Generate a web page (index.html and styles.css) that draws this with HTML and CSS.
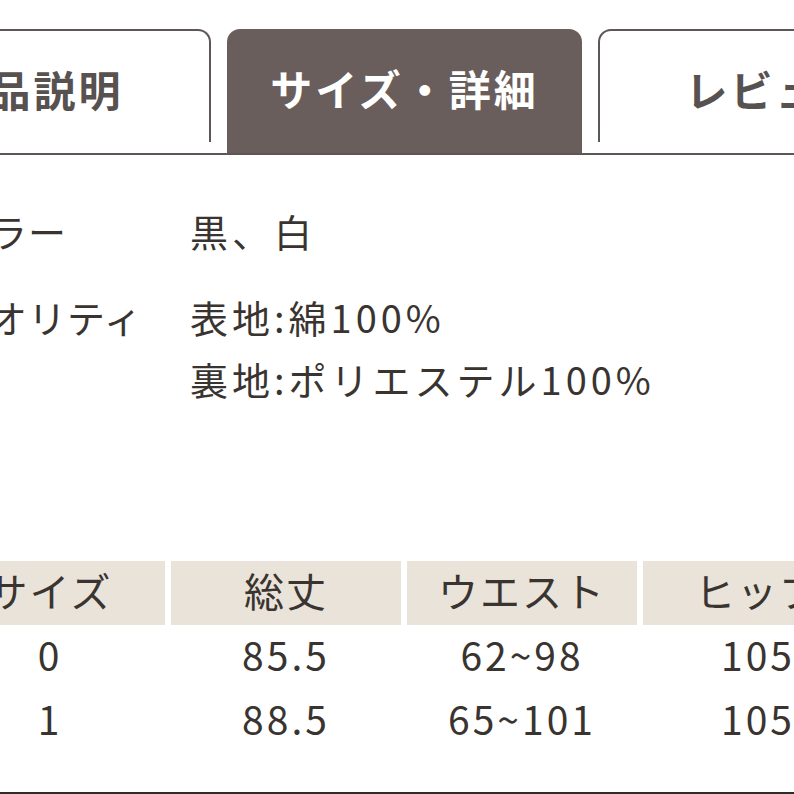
FILE: index.html
```html
<!DOCTYPE html>
<html lang="ja">
<head>
<meta charset="utf-8">
<link rel="stylesheet" href="styles.css">
</head>
<body>
<div class="page">
  <div class="tabs">
    <div class="tab">製品説明</div>
    <div class="tab active">サイズ・詳細</div>
    <div class="tab">レビュー</div>
  </div>
  <div class="info">
    <div class="info-row">
      <div class="label">カラー</div>
      <div class="value">黒、白</div>
    </div>
    <div class="info-row">
      <div class="label">クオリティ</div>
      <div class="value">表地:綿100%<br>裏地:ポリエステル100%</div>
    </div>
  </div>
  <div class="size-table">
    <div class="tr head">
      <div class="td">サイズ</div>
      <div class="td">総丈</div>
      <div class="td">ウエスト</div>
      <div class="td">ヒップ</div>
    </div>
    <div class="tr">
      <div class="td">0</div>
      <div class="td">85.5</div>
      <div class="td">62~98</div>
      <div class="td">105</div>
    </div>
    <div class="tr">
      <div class="td">1</div>
      <div class="td">88.5</div>
      <div class="td">65~101</div>
      <div class="td">105</div>
    </div>
  </div>
  <div class="bottom-line"></div>
</div>
</body>
</html>
```
FILE: styles.css
```css
html, body {
  margin: 0;
  padding: 0;
  background: #ffffff;
}
body {
  width: 794px;
  height: 794px;
  overflow: hidden;
  font-family: "Noto Sans CJK JP", "Noto Sans", sans-serif;
  color: #3a3431;
}
.page {
  padding-top: 29px;
  display: flex;
  flex-direction: column;
}
.tabs {
  display: flex;
  align-items: flex-start;
  gap: 16px;
  margin-left: -144px;
  width: 1100px;
  border-bottom: 2px solid #5c5654;
}
.tab {
  flex: 0 0 355px;
  box-sizing: border-box;
  height: 113px;
  border: 2px solid #5c5654;
  border-bottom: none;
  border-radius: 13px 13px 0 0;
  display: flex;
  align-items: center;
  justify-content: center;
  font-size: 42px;
  line-height: 1;
  font-weight: 700;
  letter-spacing: 3px;
  color: #575150;
  padding-top: 4px;
}
.tab.active {
  height: 124px;
  padding-top: 0;
  padding-bottom: 8px;
  background: #695e5b;
  border-color: #695e5b;
  color: #ffffff;
}
.info {
  margin-top: 45px;
  display: flex;
  flex-direction: column;
  gap: 24px;
}
.info-row {
  display: flex;
  font-size: 38px;
  line-height: 62px;
}
.label {
  width: 240px;
  margin-left: -50px;
  letter-spacing: 1px;
}
.value {
  letter-spacing: 4px;
}
.size-table {
  margin-top: 151px;
  margin-left: -65px;
  display: flex;
  flex-direction: column;
}
.tr {
  display: flex;
  gap: 6px;
  height: 64px;
}
.td {
  flex: 0 0 230px;
  box-sizing: border-box;
  display: flex;
  align-items: center;
  justify-content: center;
  font-size: 39px;
  letter-spacing: 3px;
  padding-bottom: 6px;
}
.tr.head .td {
  background: #e9e3d9;
  font-size: 40px;
  letter-spacing: 2px;
}
.bottom-line {
  margin-top: 39px;
  height: 2px;
  background: #2e2a28;
}
```
